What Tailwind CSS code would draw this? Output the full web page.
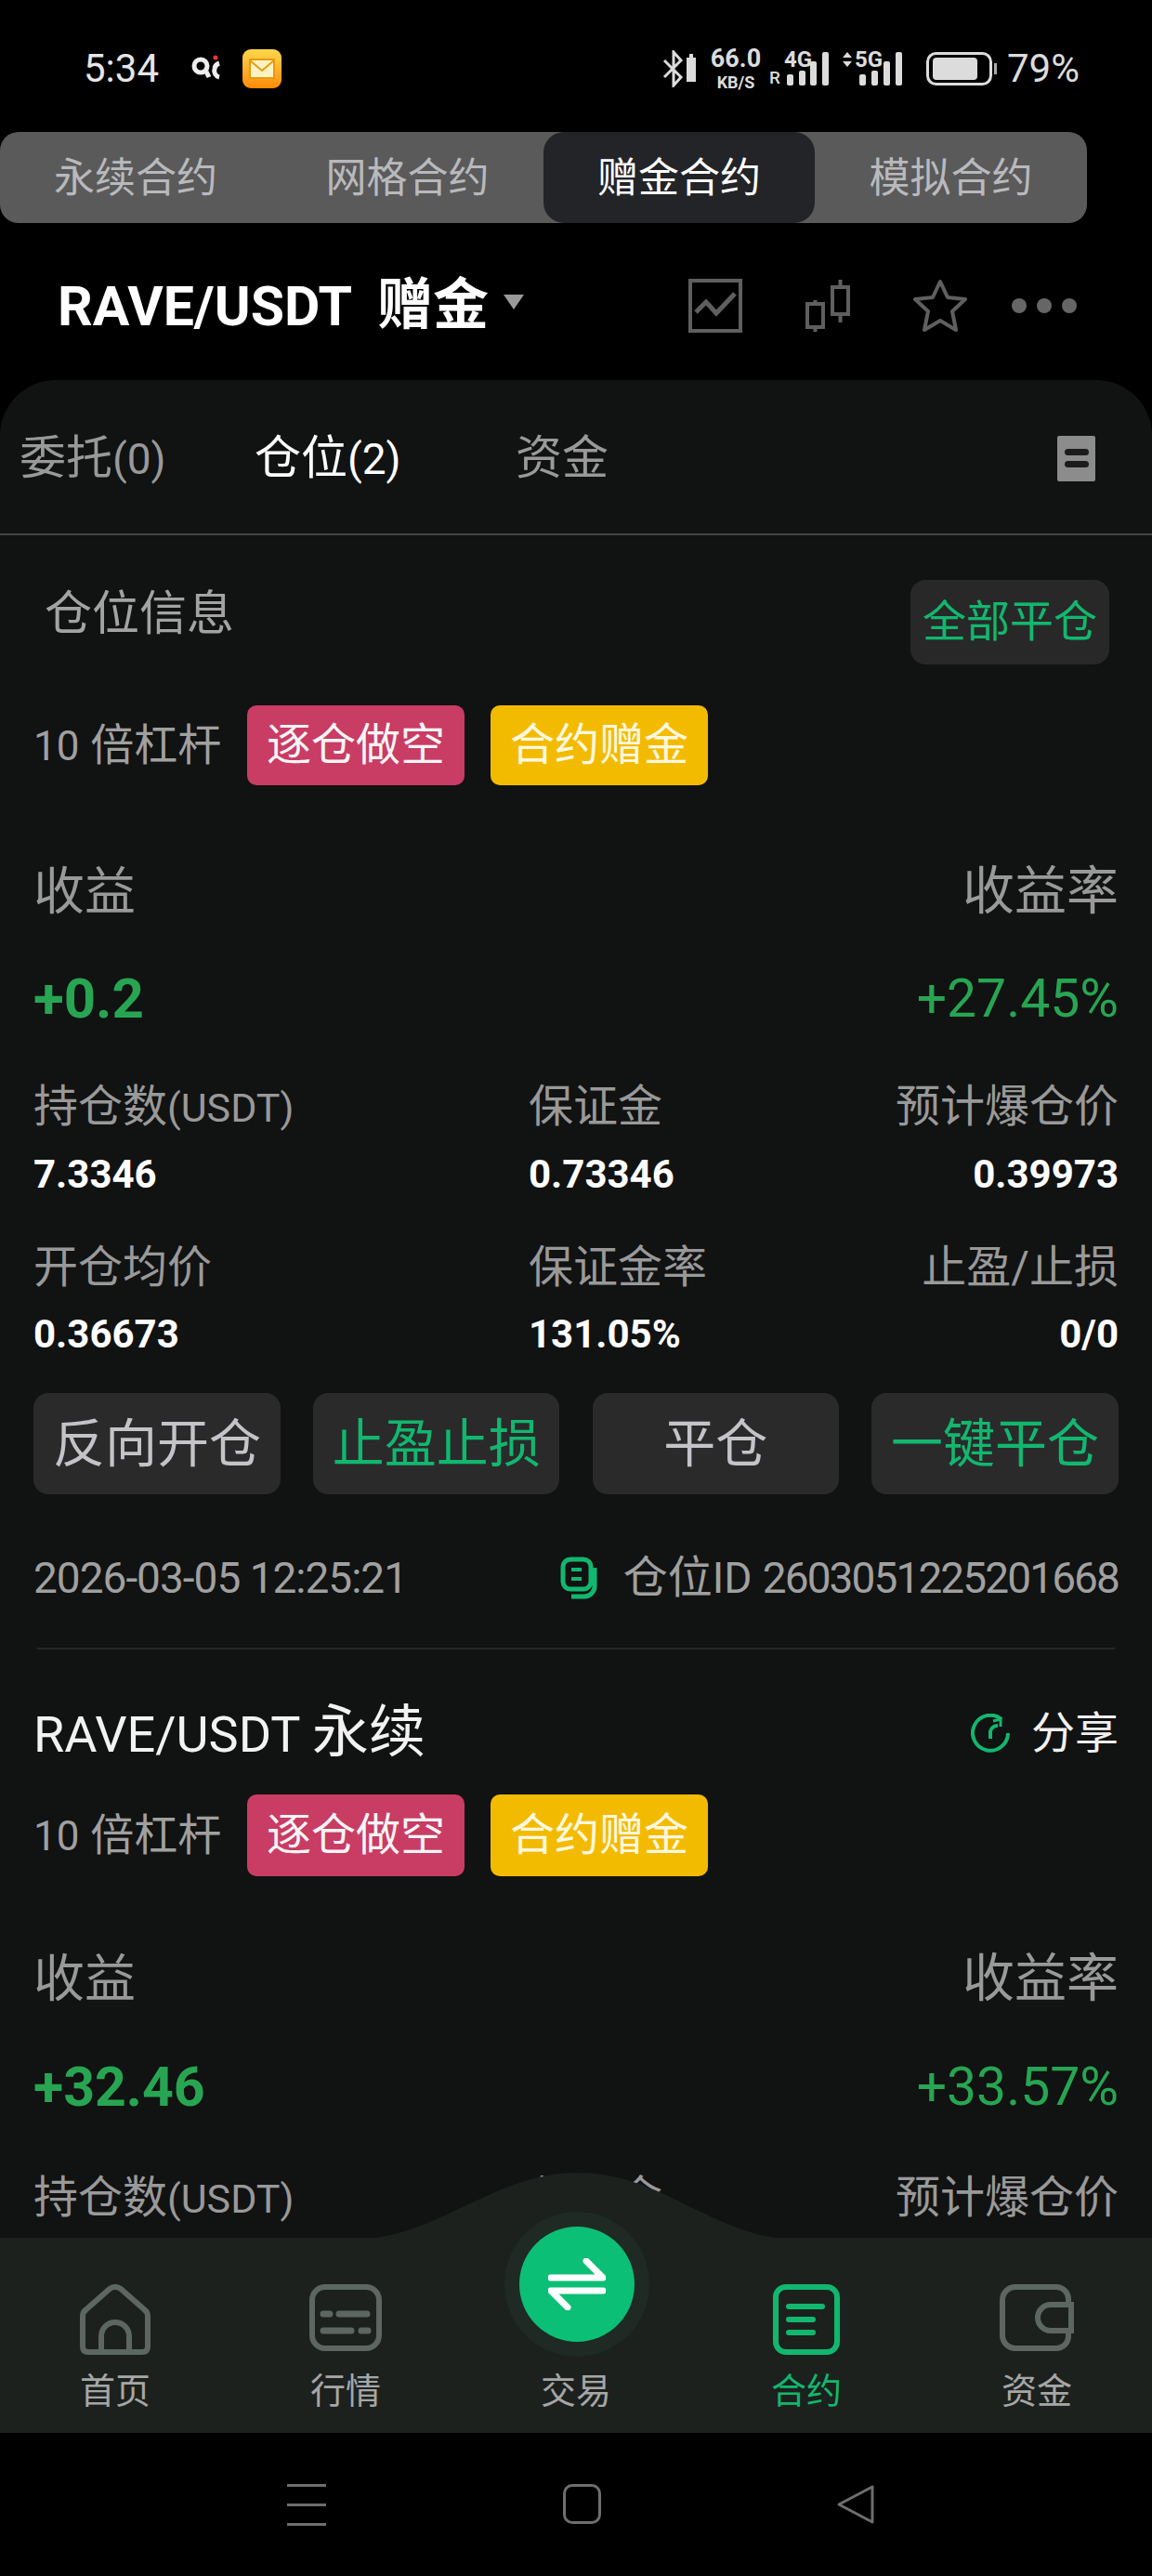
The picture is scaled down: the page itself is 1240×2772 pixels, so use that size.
<!DOCTYPE html>
<html>
<head>
    <meta charset="utf-8" />
    <script src="https://cdn.jsdelivr.net/npm/@tailwindcss/browser@4"></script>
    <title>赠金合约</title>
</head>
<body class="bg-black font-['Roboto','Noto_Sans_CJK_SC',sans-serif]">
<div class="relative w-[1240px] h-[2772px] overflow-hidden bg-black text-white">

    <!-- status bar -->
    <div class="h-[142px] pt-[52px] pl-[90px] pr-[78px] flex items-start justify-between">
        <div class="flex items-center h-[44px]">
            <span class="text-[42px] leading-none text-[#e6e6e6] w-[115px]">5:34</span>
            <svg class="w-[34px] h-[30px]" viewBox="0 0 34 30" fill="none" stroke="#eee" stroke-width="5"><circle cx="11" cy="12" r="7"/><path d="M17 18l3 6"/><path d="M31 9a7 7 0 0 0-5 6 7 7 0 0 0 5 9"/><circle cx="27" cy="3" r="2.5" fill="#e33" stroke="none"/></svg>
            <div class="ml-[22px] w-[42px] h-[42px] rounded-[9px] bg-gradient-to-b from-[#ffd84a] to-[#ff8a00] flex items-center justify-center">
                <svg class="w-[28px] h-[22px]" viewBox="0 0 28 22" fill="#fff3c4" stroke="#e89a10" stroke-width="2"><rect x="1" y="1" width="26" height="20"/><path d="M1 2l13 11L27 2" fill="none"/></svg>
            </div>
        </div>
        <div class="flex items-center h-[44px] text-[#dcdcdc]">
            <svg class="w-[40px] h-[40px]" viewBox="0 0 40 40" fill="none" stroke="#dcdcdc" stroke-width="3"><path d="M2 11l18 18-8 9V2l8 9L2 29"/><rect x="26" y="8" width="10" height="26" fill="#dcdcdc" stroke="none"/><rect x="29" y="4" width="4" height="4" fill="#dcdcdc" stroke="none"/></svg>
            <div class="ml-[8px] w-[62px] flex flex-col items-center font-bold gap-[3px]">
                <span class="text-[27px] leading-[27px]">66.0</span>
                <span class="text-[18px] leading-[18px]">KB/S</span>
            </div>
            <svg class="ml-[2px] w-[78px] h-[50px]" viewBox="0 -3 78 50" fill="#dcdcdc"><text x="3" y="38" font-size="19" font-weight="500" font-family="Roboto">R</text><text x="19" y="20" font-size="24" font-weight="700" font-family="Roboto">4G</text><rect x="22" y="28" width="7" height="12" rx="2"/><rect x="35" y="24" width="7" height="16" rx="2"/><rect x="47" y="14" width="7" height="26" rx="2"/><rect x="60" y="4" width="7" height="36" rx="2"/></svg>
            <svg class="ml-[2px] w-[78px] h-[50px]" viewBox="0 -3 78 50" fill="#dcdcdc"><path d="M2 10l5-6 5 6zM2 14l5 6 5-6z"/><text x="15" y="20" font-size="24" font-weight="700" font-family="Roboto">5G</text><rect x="20" y="28" width="7" height="12" rx="2"/><rect x="33" y="24" width="7" height="16" rx="2"/><rect x="46" y="14" width="7" height="26" rx="2"/><rect x="59" y="4" width="7" height="36" rx="2"/></svg>
            <svg class="ml-[14px] w-[76px] h-[36px]" viewBox="0 0 76 36" fill="none"><rect x="1.5" y="1.5" width="68" height="33" rx="9" stroke="#dcdcdc" stroke-width="3"/><rect x="7" y="6" width="48" height="24" rx="4" fill="#dcdcdc"/><rect x="73" y="12" width="3" height="12" fill="#aaa"/></svg>
            <span class="ml-[11px] text-[42px] leading-none">79%</span>
        </div>
    </div>

    <!-- contract type tabs -->
    <div class="w-[1170px] h-[98px] rounded-[20px] bg-[#5a5a5a] flex items-center text-[44px] text-[#b9b9bd]">
        <div class="w-[292px] text-center pt-[2px]">永续合约</div>
        <div class="w-[293px] text-center pt-[2px]">网格合约</div>
        <div class="w-[292px] h-full pt-[2px] rounded-[22px] bg-[#232427] text-white flex items-center justify-center">赠金合约</div>
        <div class="w-[293px] text-center pt-[2px]">模拟合约</div>
    </div>

    <!-- pair header -->
    <div class="h-[169px] pl-[62px] pr-[81px] pt-[9px] flex items-center">
        <span class="text-[59px] font-bold leading-none">RAVE/USDT</span>
        <span class="ml-[27px] text-[60px] font-bold leading-none">赠金</span>
        <span class="ml-[16px] w-0 h-0 border-x-[11px] border-x-transparent border-t-[16px] border-t-[#9a9a9a] -mt-[8px]"></span>
        <div class="ml-auto flex items-center">
            <svg class="w-[58px] h-[58px]" viewBox="0 0 58 58" fill="none" stroke="#5f5f5f" stroke-width="4"><rect x="2" y="2" width="54" height="54"/><path d="M8 36l11-11 11 12 20-21" stroke-width="5"/></svg>
            <svg class="ml-[68px] w-[48px] h-[58px]" viewBox="0 0 48 58" fill="none" stroke="#5f5f5f" stroke-width="4"><rect x="2" y="27" width="17" height="25"/><path d="M10.500 23v4M10.500 52v5"/><rect x="29" y="9" width="17" height="29"/><path d="M37.500 1v8M37.500 38v9"/></svg>
            <svg class="ml-[68px] w-[58px] h-[58px]" viewBox="0 0 58 58" fill="none" stroke="#5f5f5f" stroke-width="4" stroke-linejoin="round"><path d="M29 3l8 17 19 2-14 13 4 20-17-10-17 10 4-20L2 22l19-2z"/></svg>
            <div class="ml-[48px] flex gap-[11px]">
                <span class="w-[16px] h-[16px] rounded-full bg-[#666]"></span>
                <span class="w-[16px] h-[16px] rounded-full bg-[#666]"></span>
                <span class="w-[16px] h-[16px] rounded-full bg-[#666]"></span>
            </div>
        </div>
    </div>

    <!-- positions card -->
    <div class="h-[2000px] rounded-t-[60px] bg-[#111212] overflow-hidden">
        <div class="h-[167px] pl-[21px] pr-[61px] pt-[3px] flex items-center border-b-2 border-[#444] text-[50px] text-[#999]">
            <span class="w-[253px]">委托<span class="text-[46px]">(0)</span></span>
            <span class="w-[281px] text-white">仓位<span class="text-[46px]">(2)</span></span>
            <span>资金</span>
            <div class="ml-auto w-[41px] h-[49px] rounded-[2px] bg-[#8c8c8c] flex flex-col items-center justify-center gap-[6px]">
                <span class="w-[26px] h-[7px] rounded-full bg-[#1c1c1c]"></span>
                <span class="w-[26px] h-[7px] rounded-full bg-[#1c1c1c]"></span>
            </div>
        </div>

        <div class="px-[36px]">
            <div class="mt-[14px] h-[150px] pl-[12px] -mr-[-10px] flex items-center justify-between pt-[8px]">
                <span class="text-[51px] text-[#a3a3a3] -mt-[16px]">仓位信息</span>
                <span class="w-[214px] h-[91px] rounded-[16px] bg-[#282828] flex items-center justify-center text-[47px] text-[#12b76f]">全部平仓</span>
            </div>

            <div class="mt-[5px] h-[114px] flex items-center text-[#a0a0a0] text-[47px]">
                <span class="w-[230px] whitespace-nowrap"><span class="text-[44px]">10</span> 倍杠杆</span>
                <span class="w-[234px] h-[86px] rounded-[10px] bg-[#c93c64] flex items-center justify-center text-[#f5f5f5] text-[48px]">逐仓做空</span>
                <span class="ml-[28px] w-[234px] h-[86px] rounded-[10px] bg-[#f3bb00] flex items-center justify-center text-[#fff8e0] text-[48px]">合约赠金</span>
            </div>

            <div class="mt-[68px] h-[64px] flex items-center justify-between text-[55px] text-[#999]">
                <span>收益</span><span class="text-[56px]">收益率</span>
            </div>
            <div class="mt-[52px] h-[64px] flex items-center justify-between text-[57px] text-[#27a552]">
                <span class="font-bold text-[60px]">+0.2</span><span>+27.45%</span>
            </div>

            <div class="mt-[52px] grid grid-cols-[533px_1fr_auto] text-[#999] text-[48px] leading-[64px]">
                <span>持仓数<span class="text-[43px]">(USDT)</span></span><span>保证金</span><span class="text-right">预计爆仓价</span>
            </div>
            <div class="mt-[8px] grid grid-cols-[533px_1fr_auto] text-white font-bold text-[42px] leading-[64px]">
                <span>7.3346</span><span>0.73346</span><span class="text-right">0.39973</span>
            </div>
            <div class="mt-[36px] grid grid-cols-[533px_1fr_auto] text-[#999] text-[48px] leading-[64px]">
                <span>开仓均价</span><span>保证金率</span><span class="text-right">止盈/止损</span>
            </div>
            <div class="mt-[8px] grid grid-cols-[533px_1fr_auto] text-white font-bold text-[42px] leading-[64px]">
                <span>0.36673</span><span>131.05%</span><span class="text-right">0/0</span>
            </div>

            <div class="mt-[31px] flex justify-between text-[56px] text-[#c4c4c8]">
                <span class="w-[266px] h-[109px] rounded-[16px] bg-[#2a2a2b] flex items-center justify-center">反向开仓</span>
                <span class="w-[265px] h-[109px] rounded-[16px] bg-[#2a2a2b] flex items-center justify-center text-[#12b76f]">止盈止损</span>
                <span class="w-[265px] h-[109px] rounded-[16px] bg-[#2a2a2b] flex items-center justify-center">平仓</span>
                <span class="w-[266px] h-[109px] rounded-[16px] bg-[#2a2a2b] flex items-center justify-center text-[#12b76f]">一键平仓</span>
            </div>

            <div class="h-[165px] pt-[15px] flex items-center text-[#a0a0a0] text-[46px]">
                <span class="tracking-[-1px]">2026-03-05 12:25:21</span>
                <svg class="ml-auto w-[40px] h-[46px]" viewBox="0 0 40 46" fill="none" stroke="#12b76f" stroke-width="5"><rect x="3" y="3" width="30" height="32" rx="8"/><path d="M37 12v20a11 11 0 0 1-11 11H12"/><path d="M12 14h11M12 24h11" stroke-width="4"/></svg>
                <span class="ml-[28px]"><span class="text-[48px]">仓位</span>ID <span class="tracking-[-1.9px]">2603051225201668</span></span>
            </div>
        </div>

        <div class="mx-[40px] h-[2px] bg-[#262627]"></div>

        <div class="px-[36px]">
            <div class="mt-[56px] h-[68px] flex items-center justify-between">
                <span class="text-[54px] text-[#f2f2f2]">RAVE/USDT <span class="text-[61px]">永续</span></span>
                <div class="flex items-center">
                    <svg class="w-[42px] h-[42px]" viewBox="0 0 42 42" fill="none" stroke="#12b76f" stroke-width="4"><path d="M33 6A19 19 0 1 0 40 21"/><path d="M21 27l0-8a8 8 0 0 1 8-6"/><path d="M24 8l8-2 0 8" stroke-width="3"/></svg>
                    <span class="ml-[23px] text-[47px] text-[#f0f0f0]">分享</span>
                </div>
            </div>
            <div class="mt-[32px] h-[88px] flex items-center text-[#a0a0a0] text-[47px]">
                <span class="w-[230px] whitespace-nowrap"><span class="text-[44px]">10</span> 倍杠杆</span>
                <span class="w-[234px] h-[88px] rounded-[10px] bg-[#c93c64] flex items-center justify-center text-[#f5f5f5] text-[48px]">逐仓做空</span>
                <span class="ml-[28px] w-[234px] h-[88px] rounded-[10px] bg-[#f3bb00] flex items-center justify-center text-[#fff8e0] text-[48px]">合约赠金</span>
            </div>
            <div class="mt-[78px] h-[64px] flex items-center justify-between text-[55px] text-[#999]">
                <span>收益</span><span class="text-[56px]">收益率</span>
            </div>
            <div class="mt-[53px] h-[64px] flex items-center justify-between text-[57px] text-[#27a552]">
                <span class="font-bold text-[59px]">+32.46</span><span>+33.57%</span>
            </div>
            <div class="mt-[55px] grid grid-cols-[533px_1fr_auto] text-[#999] text-[48px] leading-[64px]">
                <span>持仓数<span class="text-[43px]">(USDT)</span></span><span>保证金</span><span class="text-right">预计爆仓价</span>
            </div>
        </div>
    </div>

    <!-- bottom tab bar, overlaps the scrolling card -->
    <div class="absolute left-0 top-[2338px] w-[1240px] h-[280px]">
        <svg class="absolute left-0 top-0 w-[1240px] h-[72px]" viewBox="0 0 1240 72"><path d="M380 72C470 72 530 0 622 0S770 72 860 72z" fill="#1c211e"/></svg>
        <div class="absolute left-0 top-[70px] w-[1240px] h-[210px] bg-[#1c211e]"></div>
        <div class="absolute left-[543px] top-[42px] w-[156px] h-[156px] rounded-full bg-[#1f2a24] flex items-center justify-center">
            <div class="w-[124px] h-[124px] rounded-full bg-[#0cbf76] flex items-center justify-center">
                <svg class="w-[62px] h-[56px]" viewBox="0 0 62 56" fill="none" stroke="#fff" stroke-width="7" stroke-linecap="round" stroke-linejoin="round"><path d="M3 21h56L41 3"/><path d="M59 35H3l18 18"/></svg>
            </div>
        </div>
        <div class="absolute left-0 top-[120px] w-[1240px] h-[160px] grid grid-cols-[248px_248px_248px_248px_248px] text-[38px] text-[#a6a6a6]">
            <div class="flex flex-col items-center">
                <svg class="w-[76px] h-[76px]" viewBox="0 0 76 76" fill="none" stroke="#5d6660" stroke-width="6" stroke-linejoin="round"><path d="M3 34Q3 30 7 27L32 5Q38 1 44 5L69 27Q73 30 73 34V67Q73 73 67 73H9Q3 73 3 67z"/><path d="M23 73V56a15 15 0 0 1 30 0v17"/></svg>
                <span class="mt-[11px]">首页</span>
            </div>
            <div class="flex flex-col items-center">
                <svg class="w-[78px] h-[72px] mb-[4px]" viewBox="0 0 78 72" fill="none" stroke="#5d6660" stroke-width="6"><rect x="3" y="3" width="72" height="66" rx="14"/><path d="M15 32h7M32 32h30M15 50h30M56 50h7" stroke-width="7" stroke-linecap="round"/></svg>
                <span class="mt-[11px]">行情</span>
            </div>
            <div class="flex flex-col items-center">
                <div class="h-[76px]"></div>
                <span class="mt-[11px]">交易</span>
            </div>
            <div class="flex flex-col items-center text-[#12b76f]">
                <svg class="w-[72px] h-[76px]" viewBox="0 0 72 76" fill="none" stroke="#12b76f" stroke-width="6"><rect x="3" y="3" width="66" height="70" rx="11"/><path d="M17 24h36M17 38h26M17 52h26" stroke-width="6" stroke-linecap="round"/></svg>
                <span class="mt-[11px]">合约</span>
            </div>
            <div class="flex flex-col items-center">
                <svg class="w-[80px] h-[72px] mb-[4px]" viewBox="0 0 80 72" fill="none" stroke="#5d6660" stroke-width="6"><path d="M74 22V16A13 13 0 0 0 61 3H18A14 14 0 0 0 3 17v38a14 14 0 0 0 15 14h43a13 13 0 0 0 13-13v-6"/><path d="M77 22H55a14 14 0 0 0 0 28h22z"/></svg>
                <span class="mt-[11px]">资金</span>
            </div>
        </div>
    </div>

    <!-- system navigation -->
    <div class="absolute left-0 top-[2618px] w-[1240px] h-[154px]">
        <div class="absolute left-[309px] top-[55px] w-[42px] h-[45px] flex flex-col justify-between">
            <span class="h-[3px] bg-[#6e6e6e]"></span><span class="h-[3px] bg-[#6e6e6e]"></span><span class="h-[3px] bg-[#6e6e6e]"></span>
        </div>
        <div class="absolute left-[606px] top-[55px] w-[41px] h-[43px] rounded-[10px] border-[3px] border-[#6e6e6e]"></div>
        <svg class="absolute left-[900px] top-[55px] w-[42px] h-[44px]" viewBox="0 0 42 44" fill="none" stroke="#6e6e6e" stroke-width="3" stroke-linejoin="round"><path d="M39 3v38L3 22z"/></svg>
    </div>
</div>
</body>
</html>
